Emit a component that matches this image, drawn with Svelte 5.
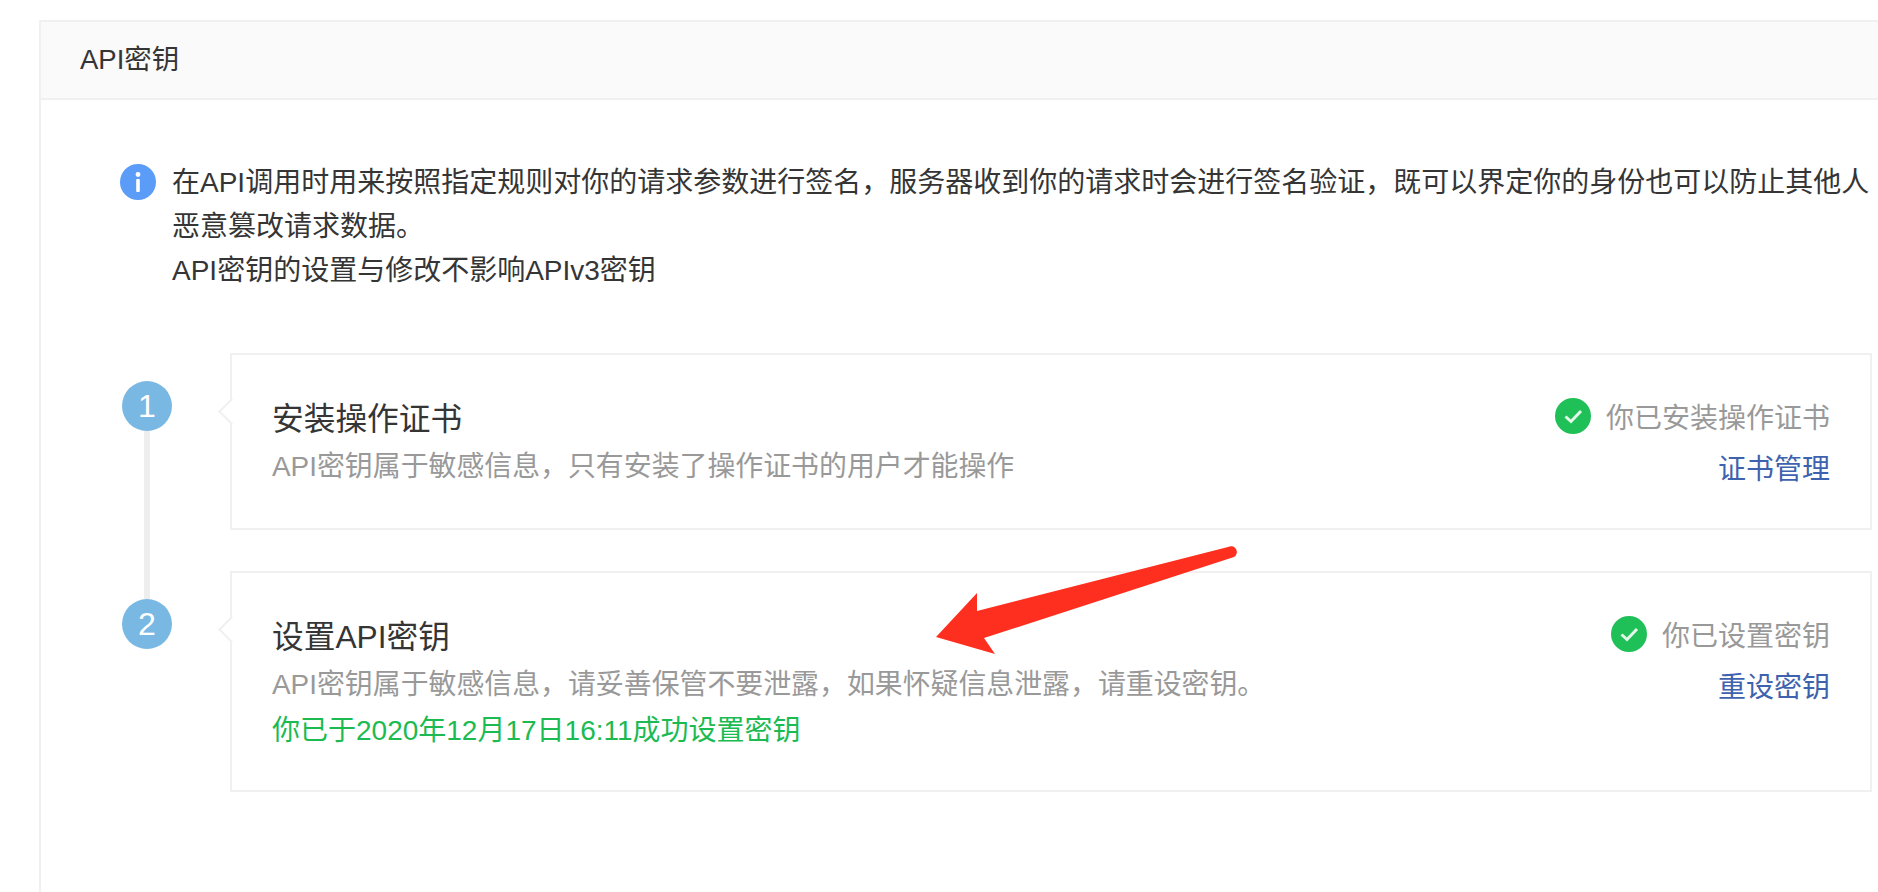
<script>
  const steps = [
    {
      num: 1,
      title: '安装操作证书',
      desc: 'API密钥属于敏感信息，只有安装了操作证书的用户才能操作',
      note: '',
      status: '你已安装操作证书',
      link: '证书管理'
    },
    {
      num: 2,
      title: '设置API密钥',
      desc: 'API密钥属于敏感信息，请妥善保管不要泄露，如果怀疑信息泄露，请重设密钥。',
      note: '你已于2020年12月17日16:11成功设置密钥',
      status: '你已设置密钥',
      link: '重设密钥'
    }
  ];
</script>

<div class="page">
  <div class="panel">
    <header class="panel-head">API密钥</header>

    <div class="panel-body">
      <div class="tips">
        <svg class="tips-icon" viewBox="0 0 36 36" width="36" height="36">
          <circle cx="18" cy="18" r="18" fill="#5a9cf8" />
          <circle cx="18" cy="10.5" r="2.4" fill="#fff" />
          <rect x="16.2" y="15" width="3.6" height="13" rx="1" fill="#fff" />
        </svg>
        <p>
          在API调用时用来按照指定规则对你的请求参数进行签名，服务器收到你的请求时会进行签名验证，既可以界定你的身份也可以防止其他人<br />恶意篡改请求数据。<br />API密钥的设置与修改不影响APIv3密钥
        </p>
      </div>

      <div class="steps">
        {#each steps as step, i}
          <div class="step">
            <div class="rail" class:connected={i < steps.length - 1}>
              <span class="num">{step.num}</span>
            </div>
            <div class="card">
              <div class="info">
                <h3>{step.title}</h3>
                <p class="desc">{step.desc}</p>
                {#if step.note}
                  <p class="note">{step.note}</p>
                {/if}
              </div>
              <div class="side">
                <div class="status">
                  <svg viewBox="0 0 36 36" width="36" height="36">
                    <circle cx="18" cy="18" r="18" fill="#20c058" />
                    <path d="M10.5 18.5l5.5 5 10-10.5" fill="none" stroke="#e4f8ea" stroke-width="3" />
                  </svg>
                  <span>{step.status}</span>
                </div>
                <a class="link" href="#top">{step.link}</a>
              </div>
            </div>
          </div>
        {/each}
      </div>
    </div>
  </div>

  <svg class="arrow" viewBox="0 0 320 125" width="320" height="125">
    <path d="M298 7L47 71L47 53L6 97L65 114L54 98L304 17A5.4 5.4 0 0 0 298 7Z" fill="#ff2f20" />
  </svg>
</div>

<style>
  :global(body) {
    margin: 0;
    background: #fff;
  }

  .page {
    position: relative;
    height: 892px;
    overflow: hidden;
    padding: 20px 0 0 39px;
    box-sizing: border-box;
    font-family: "Liberation Sans", "Noto Sans CJK SC", sans-serif;
    font-size: 28px;
    color: #353535;
  }

  .panel {
    height: 900px;
    border: 2px solid #f0f0f0;
    border-right: 0;
    box-sizing: border-box;
  }

  .panel-head {
    height: 78px;
    line-height: 75px;
    padding-left: 39px;
    font-size: 27.5px;
    background: #fafafa;
    border-bottom: 2px solid #f0f0f0;
    box-sizing: border-box;
  }

  .panel-body {
    padding: 61px 6px 0 79px;
  }

  .tips {
    display: flex;
    gap: 16px;
  }

  .tips-icon {
    flex: none;
    margin-top: 3px;
  }

  .tips p {
    margin: 0;
    line-height: 44px;
    white-space: nowrap;
  }

  .steps {
    display: flex;
    flex-direction: column;
    gap: 41px;
    margin-top: 60px;
  }

  .step {
    display: flex;
  }

  .rail {
    position: relative;
    flex: none;
    width: 110px;
    padding: 28px 0 0 2px;
    box-sizing: border-box;
  }

  .rail.connected::after {
    content: "";
    position: absolute;
    left: 24px;
    top: 78px;
    width: 6px;
    height: 168px;
    background: #eee;
  }

  .num {
    display: block;
    width: 50px;
    height: 50px;
    line-height: 50px;
    border-radius: 50%;
    background: #7ab8e4;
    color: #fff;
    font-size: 32px;
    text-align: center;
  }

  .card {
    position: relative;
    flex: 1;
    display: flex;
    justify-content: space-between;
    padding: 40px 40px 37px 40px;
    border: 2px solid #f0f0f0;
    background: #fff;
  }

  .card::before {
    content: "";
    position: absolute;
    left: -10px;
    top: 47px;
    width: 17px;
    height: 17px;
    background: #fff;
    border-left: 2px solid #f0f0f0;
    border-bottom: 2px solid #f0f0f0;
    transform: rotate(45deg);
  }

  .info h3 {
    margin: 0;
    font-size: 31.7px;
    font-weight: 400;
    line-height: 48px;
  }

  .desc {
    margin: 0;
    font-size: 27.9px;
    line-height: 48px;
    color: #999;
  }

  .note {
    margin: 0;
    line-height: 44px;
    color: #1cbb52;
  }

  .side {
    display: flex;
    flex-direction: column;
    align-items: flex-end;
    margin: -1px 0 -2px;
  }

  .status {
    display: flex;
    align-items: center;
    gap: 15px;
    height: 44px;
    color: #999;
  }

  .link {
    margin-top: 10px;
    line-height: 44px;
    color: #3e62ad;
    text-decoration: none;
  }

  .arrow {
    position: absolute;
    left: 930px;
    top: 540px;
  }
</style>
